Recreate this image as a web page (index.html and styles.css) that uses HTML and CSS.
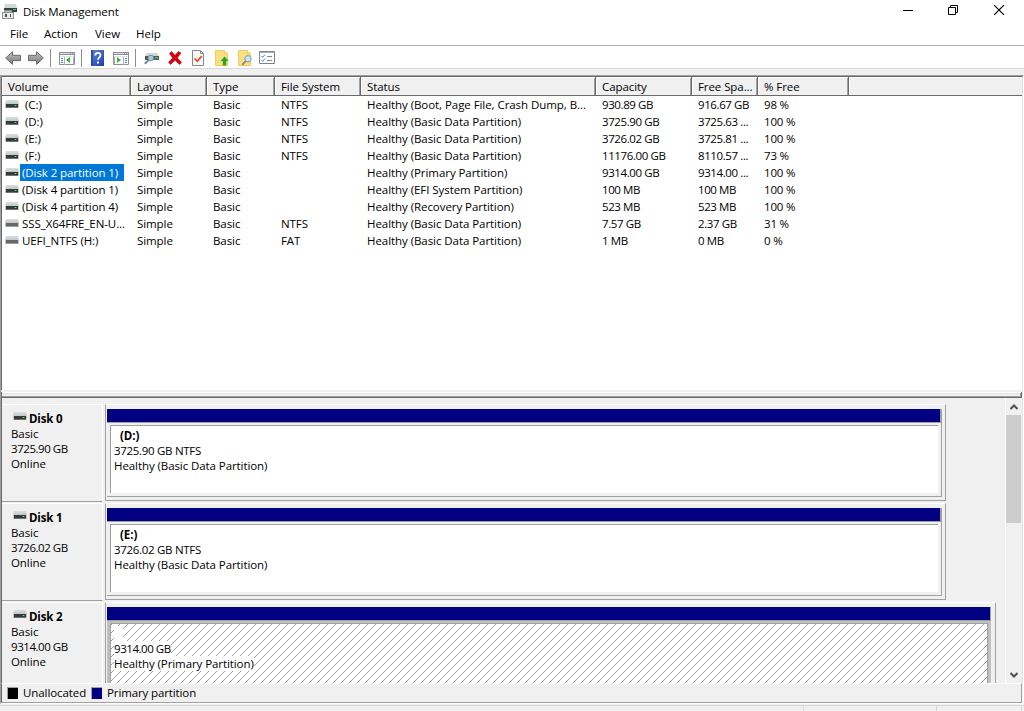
FILE: index.html
```html
<!DOCTYPE html>
<html lang="en">
<head>
  <meta charset="UTF-8">
  <title>Disk Management</title>
  <link rel="stylesheet" href="styles.css">
</head>
<body>
<svg class="defs" width="0" height="0">
  <defs>
    <linearGradient id="lid" x1="0" y1="0" x2="0" y2="1"><stop offset="0" stop-color="#dcdee0"/><stop offset="1" stop-color="#c3c6c9"/></linearGradient>
    <linearGradient id="arrow-fill" x1="0" y1="0" x2="0" y2="1"><stop offset="0" stop-color="#c4c4c4"/><stop offset="1" stop-color="#777"/></linearGradient>
    <linearGradient id="help-fill" x1="0" y1="0" x2="1" y2="1"><stop offset="0" stop-color="#5f86dc"/><stop offset="1" stop-color="#1c3fa8"/></linearGradient>
    <symbol id="drive" viewBox="0 0 14 8">
      <path d="M1 0h12l1 4H0z" fill="url(#lid)"/>
      <path d="M0 4h14v4H0z" fill="#c3c6c9"/>
      <path d="M1 4h12v3H1z" fill="#38393b"/>
      <path d="M1 7h12v1H1z" fill="#6f7173"/>
      <path d="M10 5h1v1h-1z" fill="#3cff50"/>
      <path d="M9 5h1v1H9zM11 5h1v1h-1z" fill="#1f8a2c"/>
    </symbol>
    <symbol id="removable" viewBox="0 0 14 8">
      <path d="M1 0h12l1 4H0z" fill="url(#lid)"/>
      <path d="M0 4h14v4H0z" fill="#c3c6c9"/>
      <path d="M1 4h12v3H1z" fill="#66696c"/>
      <path d="M1 7h12v1H1z" fill="#9a9c9e"/>
    </symbol>
  </defs>
</svg>

<div class="window">
  <header class="titlebar">
    <svg class="app-icon" width="16" height="16" viewBox="0 0 16 16">
      <path d="M3 0h11l1 4H2z" fill="#d3d5d7"/>
      <path d="M2 4h13v4H2z" fill="#3b3c3e"/>
      <path d="M11 5h3v1h-3z" fill="#2fe24a"/>
      <path d="M2 6h8v2h2v7H0V8h2z" fill="#8f9294"/>
      <path d="M1 9h10v5H1z" fill="#e9eaeb"/>
      <path d="M3 10h2v3H3zM8 10h1v3H8z" fill="#4d4f51"/>
      <path d="M3 7h6v1H3z" fill="#b9bcbe"/>
    </svg>
    <span class="window-title">Disk Management</span>
    <div class="window-buttons">
      <svg width="10" height="10" viewBox="0 0 10 10"><path d="M0 5h10v1H0z"/></svg>
      <svg width="10" height="10" viewBox="0 0 10 10"><path d="M.5 2.5h7v7h-7zM2.5 2.5v-2h7v7h-2" fill="none" stroke="#000"/></svg>
      <svg class="close" width="11" height="10" viewBox="0 0 11 10"><path d="M0 0l10 10M10 0L0 10" fill="none" stroke="#000" stroke-width="1.1"/></svg>
    </div>
  </header>

  <nav class="menubar">
    <span class="menu-file">File</span>
    <span class="menu-action">Action</span>
    <span class="menu-view">View</span>
    <span class="menu-help">Help</span>
  </nav>

  <div class="toolbar">
    <svg class="t-back" width="16" height="14" viewBox="0 0 16 14"><path d="M.7 7L7.500 .7v3.600h8v5.400h-8v3.600z" fill="url(#arrow-fill)" stroke="#6a6a6a"/></svg>
    <svg class="t-fwd" width="16" height="14" viewBox="0 0 16 14"><path d="M15.300 7L8.500 .7v3.600h-8v5.400h8v3.600z" fill="url(#arrow-fill)" stroke="#6a6a6a"/></svg>
    <i class="sep s1"></i>
    <svg class="t-tree" width="16" height="13" viewBox="0 0 16 13">
      <path d="M.5 .5h15v12H.5z" fill="#fff" stroke="#8a9096"/><path d="M0 0h16v3H0z" fill="#8a9096"/><path d="M1 1h10v1H1zM12 1h1v1h-1zM14 1h1v1h-1zM1 4h14v1H1z" fill="#dfe3e7"/>
      <path d="M5 5h1v8H5zM14 5h1v7h-1z" fill="#a9afb5"/><path d="M2 6h2v1H2zM2 8h2v1H2zM2 10h2v1H2z" fill="#4a7db5"/><path d="M11 5v6L7 8z" fill="#3cb52e"/>
    </svg>
    <i class="sep s2"></i>
    <svg class="t-help" width="13" height="16" viewBox="0 0 13 16"><path d="M0 0h13v16H0z" fill="url(#help-fill)"/><path d="M0 0h2v16H0z" fill="#294fa9"/><path d="M4.300 5.500c0-3.400 5.200-3.400 5.200-.3 0 2.200-2.500 2.200-2.500 4.600" fill="none" stroke="#fff" stroke-width="1.800"/><path d="M6 11.500h2v2H6z" fill="#fff"/></svg>
    <svg class="t-pane" width="16" height="13" viewBox="0 0 16 13">
      <path d="M.5 .5h15v12H.5z" fill="#fff" stroke="#8a9096"/><path d="M0 0h16v3H0z" fill="#8a9096"/><path d="M1 1h10v1H1zM12 1h1v1h-1zM14 1h1v1h-1zM1 4h14v1H1z" fill="#dfe3e7"/>
      <path d="M10 5h1v8h-1zM1 5h1v7H1z" fill="#a9afb5"/><path d="M12 6h2v1h-2zM12 8h2v1h-2zM12 10h2v1h-2z" fill="#4a7db5"/><path d="M4 5v6l4-3z" fill="#3cb52e"/>
    </svg>
    <i class="sep s3"></i>
    <svg class="t-drive" width="15" height="13" viewBox="0 0 15 13"><path d="M3 1h10l2 3H1z" fill="#d3d6d8"/><path d="M1 4h14v4H1z" fill="#55585a"/><path d="M11 5h3v1.500h-3z" fill="#2dd844"/><circle cx="6.800" cy="6" r="2.800" fill="#a9cbe2" stroke="#75899a"/><path d="M4.700 8L.8 11.800" stroke="#6b8aa2" stroke-width="2"/></svg>
    <svg class="t-delete" width="14" height="14" viewBox="0 0 14 14"><path d="M1.500 2.500L3.500 .5 7 4.300 10.500 .5l2.500 1.600L9.300 6.800l4.200 4.700-2 2L7 9.300l-4.500 4.200-2-2.200L4.700 7z" fill="#d9000d" stroke="#b3000a" stroke-width=".6"/></svg>
    <svg class="t-check" width="12" height="16" viewBox="0 0 12 16"><path d="M.5 .5h8l3 3v12H.5z" fill="#f7f7f8" stroke="#85888c"/><path d="M8.500 .5v3h3" fill="none" stroke="#85888c"/><path d="M2.500 8.500l2.800 2.700L9.800 6" fill="none" stroke="#ed4b16" stroke-width="1.700"/></svg>
    <svg class="t-up" width="14" height="16" viewBox="0 0 14 16"><path d="M.5 .5h9l3 3v12H.5z" fill="#fbdf80" stroke="#efcb60"/><path d="M9.500 .5v3h3" fill="#fff1b5" stroke="#efcb60"/><path d="M9.500 6.500l4 4.500h-2.300v4.500H7.800V11H5.500z" fill="#27a52c"/></svg>
    <svg class="t-find" width="15" height="16" viewBox="0 0 15 16"><path d="M.5 .5h9l3 3v12H.5z" fill="#fbdf80" stroke="#efcb60"/><path d="M9.500 .5v3h3" fill="#fff1b5" stroke="#efcb60"/><circle cx="10" cy="8.800" r="3.200" fill="#c8e4f5" stroke="#8298a9"/><path d="M7.700 11.200L4.200 14.800" stroke="#768a9a" stroke-width="1.800"/></svg>
    <svg class="t-props" width="16" height="13" viewBox="0 0 16 13"><path d="M.5 .5h15v12H.5z" fill="#fcfcfd" stroke="#80868c"/><path d="M1 1h14v1H1z" fill="#a7adb3"/><path d="M2.500 5l1.200 1.300L6 3.600M2.500 9l1.200 1.300L6 7.600" fill="none" stroke="#3b8fd5"/><path d="M8 5h5v1H8zM8 9h5v1H8z" fill="#85898d"/></svg>
  </div>

  <main class="content">
    <section class="volumes">
      <div class="row head">
        <span class="c-vol">Volume</span><span class="c-lay">Layout</span><span class="c-type">Type</span><span class="c-fs">File System</span><span class="c-stat">Status</span><span class="c-cap">Capacity</span><span class="c-free">Free Spa...</span><span class="c-pct">% Free</span><span class="c-rest"></span>
      </div>
      <div class="row"><span class="c-vol"><svg class="drive"><use href="#drive"/></svg><b class="letter">(C:)</b></span><span class="c-lay">Simple</span><span class="c-type">Basic</span><span class="c-fs">NTFS</span><span class="c-stat">Healthy (Boot, Page File, Crash Dump, B...</span><span class="c-cap">930.89 GB</span><span class="c-free">916.67 GB</span><span class="c-pct">98 %</span></div>
      <div class="row"><span class="c-vol"><svg class="drive"><use href="#drive"/></svg><b class="letter">(D:)</b></span><span class="c-lay">Simple</span><span class="c-type">Basic</span><span class="c-fs">NTFS</span><span class="c-stat">Healthy (Basic Data Partition)</span><span class="c-cap">3725.90 GB</span><span class="c-free">3725.63 ...</span><span class="c-pct">100 %</span></div>
      <div class="row"><span class="c-vol"><svg class="drive"><use href="#drive"/></svg><b class="letter">(E:)</b></span><span class="c-lay">Simple</span><span class="c-type">Basic</span><span class="c-fs">NTFS</span><span class="c-stat">Healthy (Basic Data Partition)</span><span class="c-cap">3726.02 GB</span><span class="c-free">3725.81 ...</span><span class="c-pct">100 %</span></div>
      <div class="row"><span class="c-vol"><svg class="drive"><use href="#drive"/></svg><b class="letter">(F:)</b></span><span class="c-lay">Simple</span><span class="c-type">Basic</span><span class="c-fs">NTFS</span><span class="c-stat">Healthy (Basic Data Partition)</span><span class="c-cap">11176.00 GB</span><span class="c-free">8110.57 ...</span><span class="c-pct">73 %</span></div>
      <div class="row"><span class="c-vol"><svg class="drive"><use href="#drive"/></svg><b class="selected">(Disk 2 partition 1)</b></span><span class="c-lay">Simple</span><span class="c-type">Basic</span><span class="c-fs"></span><span class="c-stat">Healthy (Primary Partition)</span><span class="c-cap">9314.00 GB</span><span class="c-free">9314.00 ...</span><span class="c-pct">100 %</span></div>
      <div class="row"><span class="c-vol"><svg class="drive"><use href="#drive"/></svg><b>(Disk 4 partition 1)</b></span><span class="c-lay">Simple</span><span class="c-type">Basic</span><span class="c-fs"></span><span class="c-stat">Healthy (EFI System Partition)</span><span class="c-cap">100 MB</span><span class="c-free">100 MB</span><span class="c-pct">100 %</span></div>
      <div class="row"><span class="c-vol"><svg class="drive"><use href="#drive"/></svg><b>(Disk 4 partition 4)</b></span><span class="c-lay">Simple</span><span class="c-type">Basic</span><span class="c-fs"></span><span class="c-stat">Healthy (Recovery Partition)</span><span class="c-cap">523 MB</span><span class="c-free">523 MB</span><span class="c-pct">100 %</span></div>
      <div class="row"><span class="c-vol"><svg class="drive"><use href="#removable"/></svg><b>SSS_X64FRE_EN-U...</b></span><span class="c-lay">Simple</span><span class="c-type">Basic</span><span class="c-fs">NTFS</span><span class="c-stat">Healthy (Basic Data Partition)</span><span class="c-cap">7.57 GB</span><span class="c-free">2.37 GB</span><span class="c-pct">31 %</span></div>
      <div class="row"><span class="c-vol"><svg class="drive"><use href="#removable"/></svg><b>UEFI_NTFS (H:)</b></span><span class="c-lay">Simple</span><span class="c-type">Basic</span><span class="c-fs">FAT</span><span class="c-stat">Healthy (Basic Data Partition)</span><span class="c-cap">1 MB</span><span class="c-free">0 MB</span><span class="c-pct">0 %</span></div>
    </section>
    <div class="splitter"></div>

    <section class="disks">
      <div class="disk-list">
        <article class="disk">
          <div class="disk-label">
            <h3><svg class="drive"><use href="#drive"/></svg>Disk 0</h3>
            <p>Basic</p><p class="size">3725.90 GB</p><p>Online</p>
          </div>
          <div class="disk-graph">
            <div class="partition">
              <div class="bar"></div>
              <div class="box"><h4>(D:)</h4><p class="size">3725.90 GB NTFS</p><p>Healthy (Basic Data Partition)</p></div>
            </div>
          </div>
        </article>
        <article class="disk">
          <div class="disk-label">
            <h3><svg class="drive"><use href="#drive"/></svg>Disk 1</h3>
            <p>Basic</p><p class="size">3726.02 GB</p><p>Online</p>
          </div>
          <div class="disk-graph">
            <div class="partition">
              <div class="bar"></div>
              <div class="box"><h4>(E:)</h4><p class="size">3726.02 GB NTFS</p><p>Healthy (Basic Data Partition)</p></div>
            </div>
          </div>
        </article>
        <article class="disk">
          <div class="disk-label">
            <h3><svg class="drive"><use href="#drive"/></svg>Disk 2</h3>
            <p>Basic</p><p class="size">9314.00 GB</p><p>Online</p>
          </div>
          <div class="disk-graph wide">
            <div class="partition active">
              <div class="bar"></div>
              <div class="box"><h4>&nbsp;</h4><p class="size">9314.00 GB</p><p>Healthy (Primary Partition)</p></div>
            </div>
          </div>
        </article>
      </div>
      <div class="scrollbar">
        <svg class="up" width="8" height="6" viewBox="0 0 8 6"><path d="M.5 5L4 1.500 7.500 5" fill="none" stroke="#505050" stroke-width="2"/></svg>
        <div class="thumb"></div>
        <svg class="down" width="8" height="6" viewBox="0 0 8 6"><path d="M.5 1L4 4.500 7.500 1" fill="none" stroke="#505050" stroke-width="2"/></svg>
      </div>
    </section>

    <footer class="legend">
      <i class="swatch black"></i><span class="unalloc">Unallocated</span>
      <i class="swatch navy"></i><span class="primary">Primary partition</span>
    </footer>
  </main>

  <div class="statusbar"><i class="st1"></i><i class="st2"></i><i class="st3"></i></div>
</div>
</body>
</html>
```
FILE: styles.css
```css
* {
  box-sizing: border-box;
}
body {
  margin: 0;
  background: #f0f0f0;
  color: #000;
  font-family: "Open Sans", "Noto Sans", sans-serif;
  font-size: 11.5px;
  letter-spacing: -0.08px;
  white-space: nowrap;
}
h3, h4, p {
  margin: 0;
  font-size: inherit;
}
svg {
  display: block;
  flex: none;
}
.defs {
  position: absolute;
}
.window {
  display: flex;
  flex-direction: column;
  width: 1024px;
  height: 711px;
  overflow: hidden;
}

/* title bar */
.titlebar {
  display: flex;
  height: 24px;
  padding-left: 2px;
  background: #fff;
}
.app-icon {
  margin-top: 4px;
}
.window-title {
  margin-left: 5px;
  line-height: 24px;
}
.window-buttons {
  display: flex;
  gap: 35px;
  margin-left: auto;
  padding: 5px 19px 0 0;
}
.close {
  margin-left: 1px;
}
.menubar {
  display: flex;
  height: 22px;
  padding-left: 10px;
  background: #fff;
  border-bottom: 1px solid #abacb0;
  line-height: 20px;
  letter-spacing: 0;
}
.menu-file { width: 34px; }
.menu-action { width: 51px; }
.menu-view { width: 41px; }

/* toolbar */
.toolbar {
  display: flex;
  align-items: center;
  height: 23px;
  padding: 2px 0 0 5px;
  background: #fff;
  border-bottom: 1px solid #d9d9d9;
}
.sep {
  width: 1px;
  height: 18px;
  background: #8d8d8d;
}
.t-fwd { margin-left: 7px; }
.s1 { margin-left: 6px; }
.t-tree { margin: 2px 0 0 8px; }
.s2 { margin-left: 6px; }
.t-help { margin-left: 9px; }
.t-pane { margin: 2px 0 0 9px; }
.s3 { margin-left: 6px; }
.t-drive { margin: 2px 0 0 8px; }
.t-delete { margin-left: 9px; }
.t-check { margin-left: 10px; }
.t-up { margin-left: 11px; }
.t-find { margin-left: 9px; }
.t-props { margin-left: 6px; }

/* sunken client area */
.content {
  display: flex;
  flex-direction: column;
  height: 634px;
  margin-top: 6px;
  border: 1px solid #a0a0a0;
  border-right-color: #fff;
  border-bottom-color: #fff;
}
.volumes {
  height: 314px;
  background: #fff;
  border: 1px solid #696969;
  border-width: 1px 1px 0;
  border-right-color: #e3e3e3;
}
.row {
  display: flex;
  height: 17px;
  line-height: 17px;
}
.row span {
  flex: none;
  padding-left: 6px;
}
.row b {
  font-weight: normal;
}
.head {
  height: 19px;
  line-height: 20px;
  background: #f0f0f0;
  border-bottom: 1px solid #696969;
}
.head span {
  border-right: 1px solid #696969;
  box-shadow: inset 1px 1px #fff, inset -1px 0 #a0a0a0;
}
.head .c-rest {
  flex: 1;
  border: 0;
  box-shadow: inset 1px 1px #fff;
}
.c-vol { width: 129px; }
.c-lay { width: 76px; }
.c-type { width: 68px; }
.c-fs { width: 86px; }
.c-stat { width: 235px; }
.c-cap { width: 96px; }
.c-free { width: 66px; }
.c-pct { width: 91px; }
.row:not(.head) .c-stat {
  letter-spacing: -0.06px;
}
.row:not(.head) .c-cap,
.row:not(.head) .c-free {
  letter-spacing: -0.4px;
}
.row:not(.head) .c-pct {
  letter-spacing: -0.2px;
}
.row:not(.head) .c-vol {
  display: flex;
  padding-left: 3px;
}
.drive {
  width: 14px;
  height: 8px;
}
.row .drive {
  margin-top: 4px;
}
.row b {
  margin-left: 1px;
  padding: 0 6px 0 2px;
}
.row .letter {
  padding-left: 5px;
}
.row .selected {
  width: 104px;
  background: #0078d7;
  color: #fff;
}
.splitter {
  height: 6px;
  margin: 2px 1px 0 0;
  border: 1px solid #696969;
  border-top: 0;
  box-shadow: inset 0 1px #fff, inset -1px -1px #a0a0a0, inset 0 2px #e3e3e3;
}

/* graphical disk view */
.disks {
  display: flex;
  height: 285px;
  padding-top: 6px;
  border-left: 1px solid #696969;
  border-right: 1px solid #e3e3e3;
}
.disk-list {
  flex: 1;
  height: 279px;
  overflow: hidden;
}
.disk {
  display: flex;
  height: 99px;
}
.disk-label {
  width: 101px;
  height: 98px;
  margin-right: 2px;
  padding: 7px 0 0 9px;
  border-top: 1px solid #fff;
  border-right: 1px solid #fff;
  border-bottom: 1px solid #a0a0a0;
  line-height: 15px;
}
.disk-label h3 {
  display: flex;
  line-height: 14px;
  letter-spacing: -0.15px;
}
.disk-label .drive {
  margin: 0 2px;
}
.disk-label .size {
  letter-spacing: -0.45px;
}
.disk-graph {
  width: 841px;
  height: 97px;
  padding: 4px 3px 3px 1px;
  border: 1px solid #a0a0a0;
  border-top-color: #fff;
}
.disk-graph.wide {
  width: 891px;
  padding-right: 4px;
}
.partition {
  height: 88px;
  border-right: 1px solid #a0a0a0;
  border-bottom: 1px solid #a0a0a0;
}
.bar {
  height: 14px;
  background: #000080;
  border-right: 1px solid #a0a0a0;
  border-bottom: 1px solid #a0a0a0;
}
.box {
  height: 68px;
  margin: 2px 3px 0 3px;
  padding: 2px 0 0 3px;
  background: #fff;
  border-top: 1px solid #a0a0a0;
  border-left: 1px solid #a0a0a0;
  line-height: 15px;
}
.box h4 {
  padding-left: 6px;
}
.box .size {
  letter-spacing: -0.3px;
}
.active {
  background: #c0c0c0;
  border-right: 0;
}
.active .box {
  height: 70px;
  border-right: 1px solid #a0a0a0;
  background: #fff url("data:image/svg+xml,%3Csvg xmlns='http://www.w3.org/2000/svg' width='8' height='8' shape-rendering='crispEdges'%3E%3Cpath fill='%23a0a0a0' d='M7 0h1v1H7zM6 1h1v1H6zM5 2h1v1H5zM4 3h1v1H4zM3 4h1v1H3zM2 5h1v1H2zM1 6h1v1H1zM0 7h1v1H0z'/%3E%3C/svg%3E") 1px 0;
}
.active .box h4,
.active .box p {
  width: max-content;
  background: #fff;
}
.active .box .size {
  letter-spacing: -0.45px;
}

.scrollbar {
  display: flex;
  flex-direction: column;
  width: 17px;
  margin-top: -6px;
  border-left: 1px solid #fff;
}
.up {
  margin: 6px 0 0 4px;
}
.thumb {
  width: 15px;
  height: 108px;
  margin-top: 5px;
  background: #cdcdcd;
}
.down {
  margin: auto 0 5px 4px;
}

.legend {
  display: flex;
  height: 20px;
  margin-right: 1px;
  padding: 3px 0 0 5px;
  border: 1px solid #a0a0a0;
  border-top-color: #fff;
  border-left-color: #696969;
  line-height: 12px;
}
.swatch {
  width: 11px;
  height: 12px;
  border: 1px solid #a0a0a0;
  border-width: 1px 0 0 1px;
}
.black { background: #000; }
.navy { background: #000080; }
.unalloc {
  width: 68px;
  margin-left: 5px;
}
.primary {
  margin-left: 5px;
  letter-spacing: -0.12px;
}
.statusbar {
  display: flex;
  height: 6px;
  margin-top: 1px;
  border-top: 1px solid #d7d7d7;
}
.statusbar i {
  width: 1px;
  background: #d7d7d7;
}
.st1 { margin-left: 803px; }
.st2 { margin-left: 132px; }
.st3 { margin-left: 84px; }
```
